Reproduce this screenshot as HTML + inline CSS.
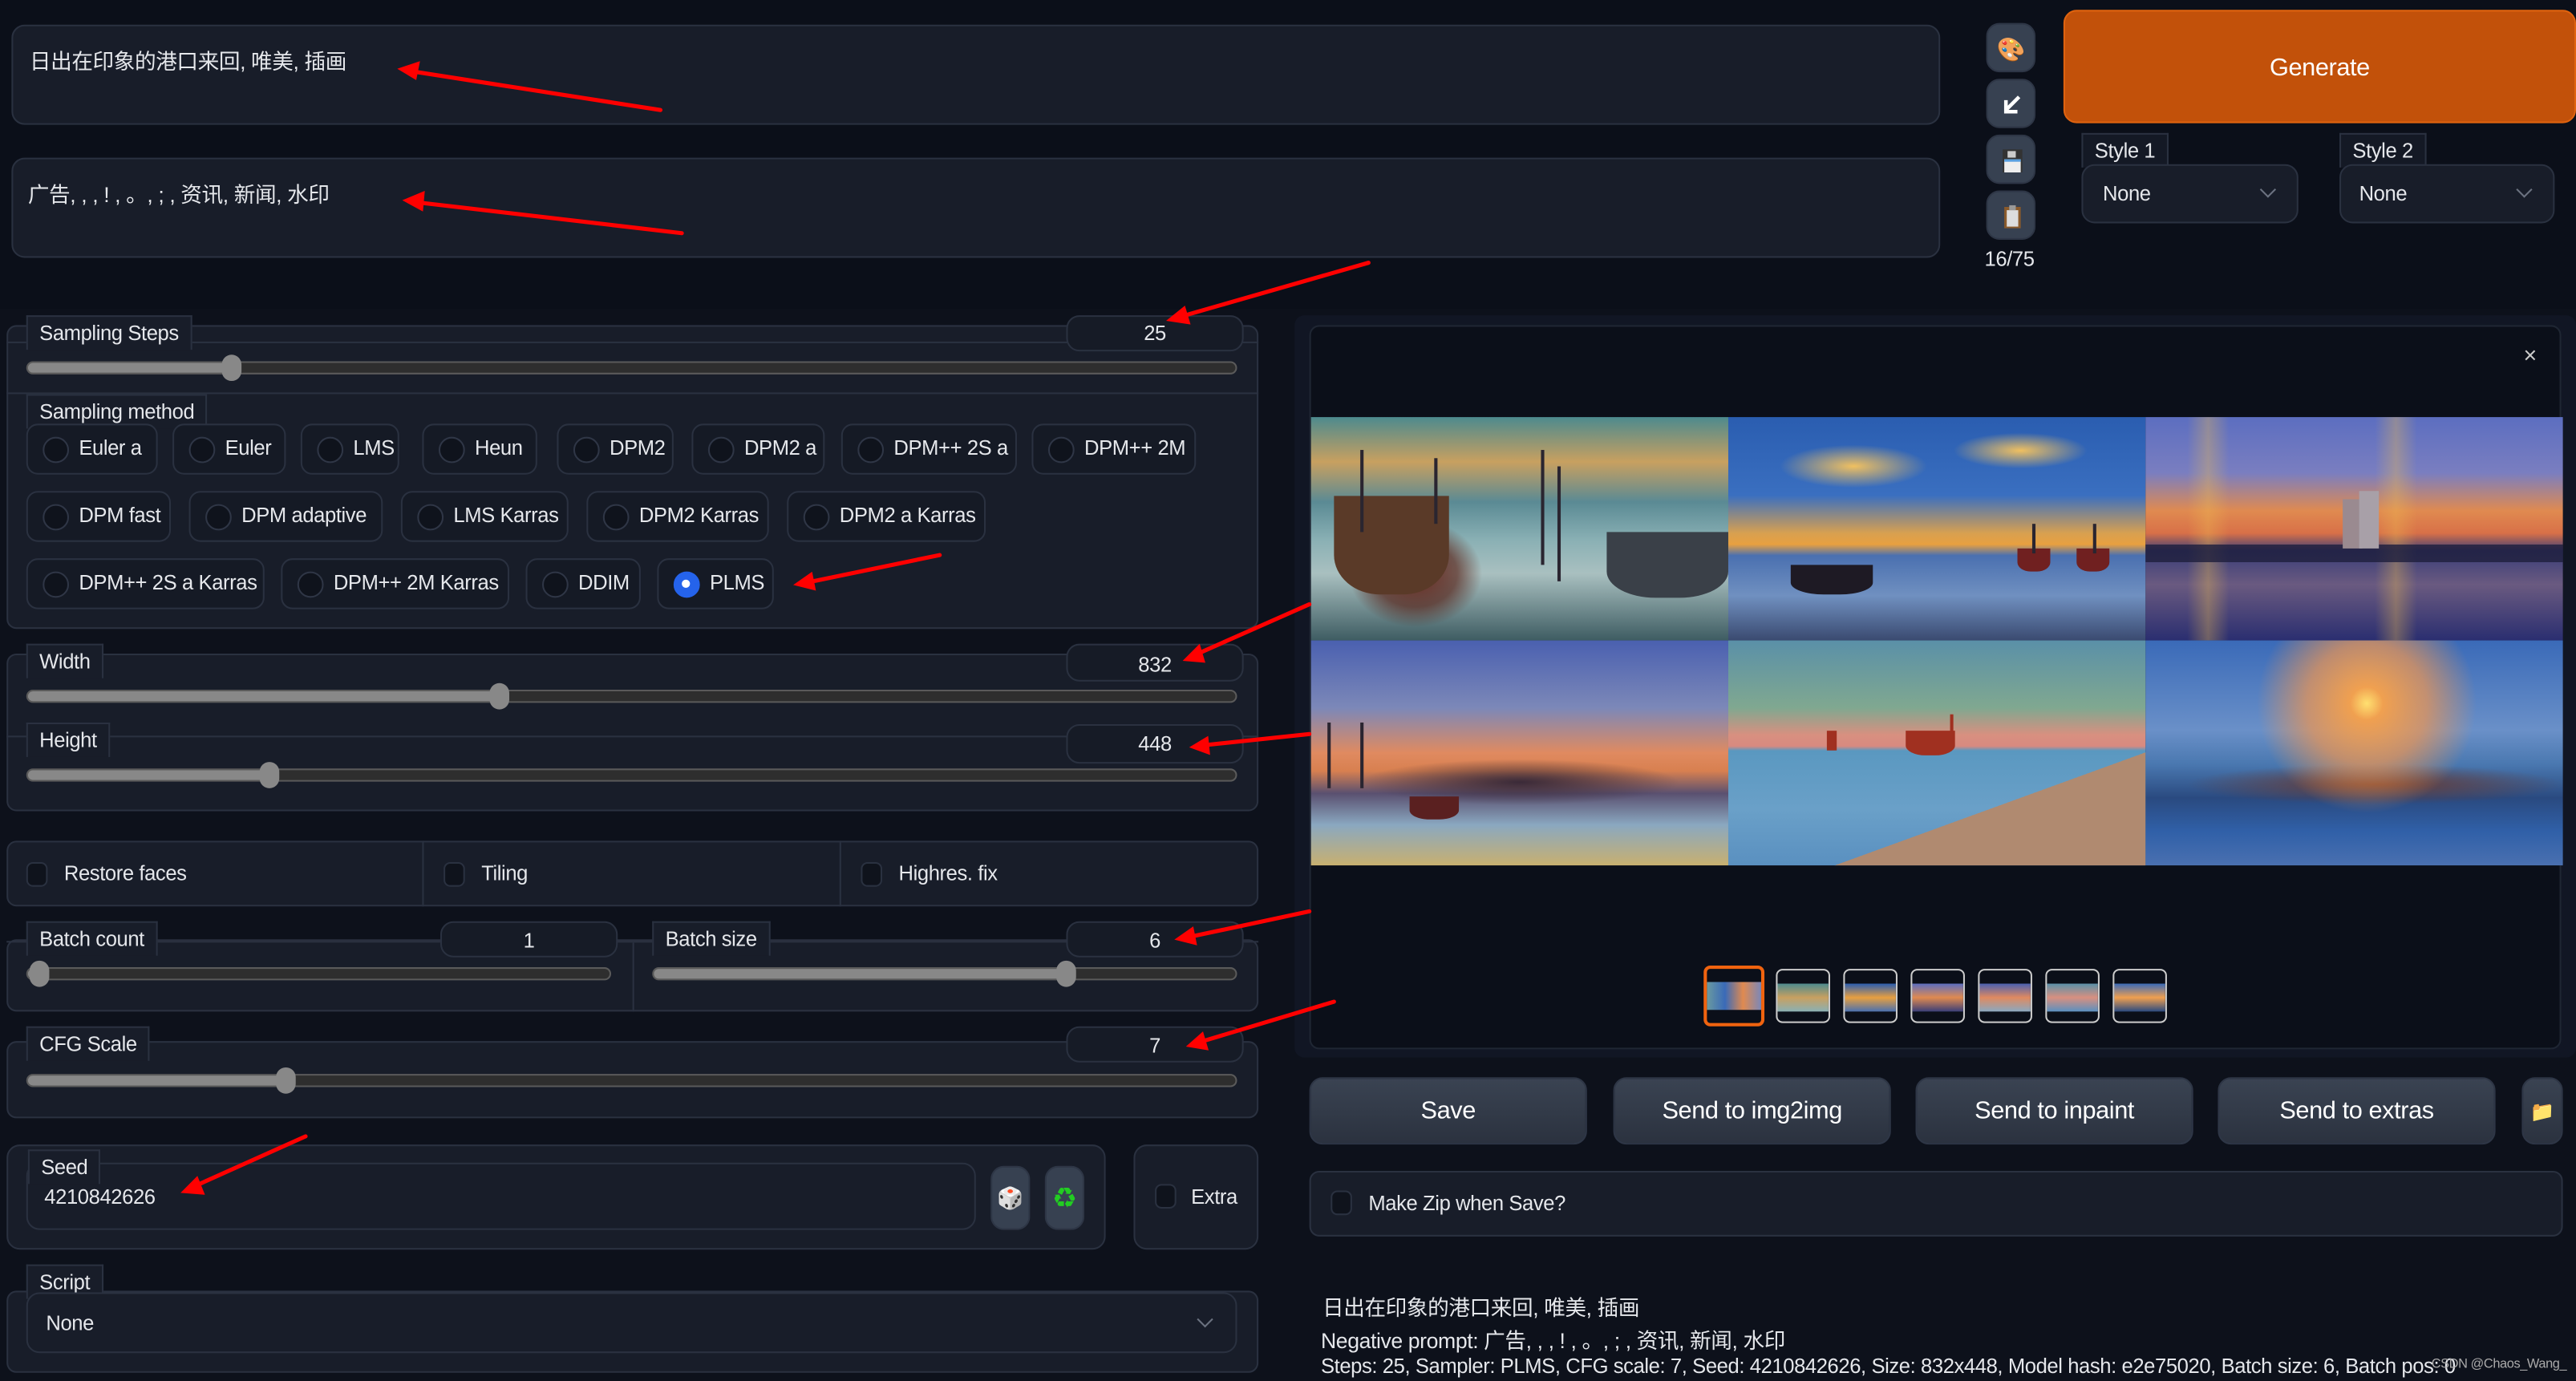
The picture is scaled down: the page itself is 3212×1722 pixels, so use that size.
<!DOCTYPE html>
<html><head><meta charset="utf-8">
<style>
*{box-sizing:border-box;margin:0;padding:0}
html,body{width:3212px;height:1722px;overflow:hidden;background:#0b0f19}
#root{position:absolute;left:0;top:0;width:1568px;height:841px;transform:scale(2.04847,2.0476);transform-origin:0 0;background:#0b0f19;font-family:"Liberation Sans","Noto Sans CJK SC",sans-serif;color:#e5e7eb;font-size:12.5px;letter-spacing:-0.2px}
.a{position:absolute}
.p{position:absolute;background:#181d29;border:1px solid #2a3140;border-radius:6px}
.lbl{position:absolute;background:#181d29;border:1px solid #2a3140;border-bottom:none;border-left:none;padding:2px 7px;font-size:12.5px;line-height:16px;white-space:nowrap}
.num{position:absolute;border:1px solid #2a3140;border-radius:8px;background:#161b26;text-align:center;font-size:12.5px;line-height:20px}
.tr{position:absolute;height:8px;border-radius:4px;background:#2e2e2e;border:1px solid #5a5a5a}
.tr i{position:absolute;left:0;top:0;bottom:0;background:#888;border-radius:4px 0 0 4px}
.tr b{position:absolute;top:-5px;width:12px;height:16px;margin-left:-6px;border-radius:6px;background:#888}
.hl{position:absolute;height:1px;background:#2a3140}
.rd{position:absolute;height:31px;border:1px solid #2a3140;border-radius:7px;background:#151a25;font-size:12.5px;line-height:29px;padding-left:31px;white-space:nowrap}
.rd:before{content:"";position:absolute;left:9px;top:7px;width:14px;height:14px;border-radius:50%;border:1px solid #2f3646;background:#0f131c}
.rd.on:before{background:#2563eb;border-color:#2563eb;box-shadow:inset 0 0 0 4px #2563eb}
.rd.on:after{content:"";position:absolute;left:14px;top:12px;width:5px;height:5px;border-radius:50%;background:#fff}
.cb{position:absolute;width:13px;height:15px;border:1px solid #2a3140;border-radius:4px;background:#0f131c}
.ib{position:absolute;width:30px;height:30px;border-radius:8px;background:#374151;border:1px solid #2e3646}
.btn{position:absolute;top:656px;height:41px;border-radius:8px;background:linear-gradient(#3a4352,#2b323f);border:1px solid #2e3646;text-align:center;line-height:40px;font-size:15px;color:#fff}
.im{position:absolute;top:254px;height:136px;width:254px;overflow:hidden}
.im2{top:390px;height:137px}
.im s{position:absolute;background:#1e1a24;border-radius:0 0 40% 40%}
.im u{position:absolute;width:1.5px;background:#2a2530}
.th{position:absolute;top:590px;width:33px;height:33px;border:1px solid #ccc;border-radius:4px;background:#0b0f19;overflow:hidden}
.th i{position:absolute;left:0;right:0;top:8px;height:17px}
.sel{position:absolute;border:1px solid #2a3140;border-radius:8px;background:#181d29}
.chev{position:absolute;width:7px;height:7px;border-right:1.5px solid #6b7280;border-bottom:1.5px solid #6b7280;transform:rotate(45deg)}
</style></head><body><div id="root">

<div class="p" style="left:7px;top:15px;width:1174px;height:61px;border-radius:8px"></div>
<div class="a" style="left:18px;top:27px;font-size:13px">日出在印象的港口来回, 唯美, 插画</div>
<div class="p" style="left:7px;top:96px;width:1174px;height:61px;border-radius:8px"></div>
<div class="a" style="left:17px;top:108px;font-size:13px">广告, , , ! , 。, ; , 资讯, 新闻, 水印</div>

<div class="ib" style="left:1209px;top:14px;text-align:center;line-height:30px;font-size:14px">🎨</div>
<div class="ib" style="left:1209px;top:48px"><svg width="30" height="30"><path d="M19 10 L11 18 M11 12 V19 H18" stroke="#fff" stroke-width="2.2" fill="none"/></svg></div>
<div class="ib" style="left:1209px;top:82px"><svg width="30" height="30"><rect x="9" y="8" width="12" height="14" fill="#333"/><rect x="10" y="14" width="10" height="8" fill="#eee"/><rect x="12" y="9" width="5" height="4" fill="#ccc"/><rect x="10" y="14" width="10" height="1.5" fill="#5aa0e0"/></svg></div>
<div class="ib" style="left:1209px;top:116px"><svg width="30" height="30"><rect x="10" y="9" width="10" height="13" fill="#8a5a2b"/><rect x="11.5" y="11" width="7" height="10" fill="#ddd"/><rect x="13" y="8" width="4" height="3" fill="#999"/></svg></div>
<div class="a" style="left:1208px;top:151px;font-size:12.5px">16/75</div>

<div class="a" style="left:1256px;top:6px;width:312px;height:69px;border-radius:8px;background:#c2510a;border:1px solid #e0630f;text-align:center;line-height:69px;font-size:15px;color:#fff">Generate</div>
<div class="lbl" style="left:1267px;top:81px;border-left:1px solid #2a3140;background:#141925">Style 1</div>
<div class="sel" style="left:1267px;top:100px;width:132px;height:36px"></div>
<div class="a" style="left:1280px;top:111px">None</div>
<div class="chev" style="left:1377px;top:112px"></div>
<div class="lbl" style="left:1424px;top:81px;border-left:1px solid #2a3140;background:#141925">Style 2</div>
<div class="sel" style="left:1424px;top:100px;width:131px;height:36px"></div>
<div class="a" style="left:1436px;top:111px">None</div>
<div class="chev" style="left:1533px;top:112px"></div>

<div class="a" style="left:0;top:188px;width:1568px;height:653px;background:#0d111b"></div>

<div class="p" style="left:4px;top:198px;width:762px;height:185px"></div>
<div class="hl" style="left:4px;top:208px;width:762px"></div>
<div class="lbl" style="left:16px;top:192px;border-left:1px solid #2a3140">Sampling Steps</div>
<div class="num" style="left:649px;top:192px;width:108px;height:22px">25</div>
<div class="tr" style="left:16px;top:220px;width:737px"><i style="width:124px"></i><b style="left:124px"></b></div>
<div class="hl" style="left:4px;top:239px;width:762px"></div>
<div class="lbl" style="left:16px;top:240px;border-left:1px solid #2a3140">Sampling method</div>
<div class="rd" style="left:16px;top:258px;width:80px">Euler a</div>
<div class="rd" style="left:105px;top:258px;width:69px">Euler</div>
<div class="rd" style="left:183px;top:258px;width:60px">LMS</div>
<div class="rd" style="left:257px;top:258px;width:70px">Heun</div>
<div class="rd" style="left:339px;top:258px;width:71px">DPM2</div>
<div class="rd" style="left:421px;top:258px;width:81px">DPM2 a</div>
<div class="rd" style="left:512px;top:258px;width:107px">DPM++ 2S a</div>
<div class="rd" style="left:628px;top:258px;width:100px">DPM++ 2M</div>
<div class="rd" style="left:16px;top:299px;width:88px">DPM fast</div>
<div class="rd" style="left:115px;top:299px;width:118px">DPM adaptive</div>
<div class="rd" style="left:244px;top:299px;width:102px">LMS Karras</div>
<div class="rd" style="left:357px;top:299px;width:111px">DPM2 Karras</div>
<div class="rd" style="left:479px;top:299px;width:121px">DPM2 a Karras</div>
<div class="rd" style="left:16px;top:340px;width:145px">DPM++ 2S a Karras</div>
<div class="rd" style="left:171px;top:340px;width:139px">DPM++ 2M Karras</div>
<div class="rd" style="left:320px;top:340px;width:70px">DDIM</div>
<div class="rd on" style="left:400px;top:340px;width:71px">PLMS</div>

<div class="p" style="left:4px;top:398px;width:762px;height:96px"></div>
<div class="lbl" style="left:16px;top:392px;border-left:1px solid #2a3140">Width</div>
<div class="num" style="left:649px;top:392px;width:108px;height:23px;line-height:24px">832</div>
<div class="tr" style="left:16px;top:420px;width:737px"><i style="width:287px"></i><b style="left:287px"></b></div>
<div class="hl" style="left:4px;top:448px;width:762px"></div>
<div class="lbl" style="left:16px;top:440px;border-left:1px solid #2a3140">Height</div>
<div class="num" style="left:649px;top:441px;width:108px;height:24px;line-height:22px">448</div>
<div class="tr" style="left:16px;top:468px;width:737px"><i style="width:147px"></i><b style="left:147px"></b></div>

<div class="p" style="left:4px;top:512px;width:762px;height:40px"></div>
<div class="a" style="left:257px;top:512px;width:1px;height:40px;background:#2a3140"></div>
<div class="a" style="left:511px;top:512px;width:1px;height:40px;background:#2a3140"></div>
<div class="cb" style="left:16px;top:525px"></div><div class="a" style="left:39px;top:525px">Restore faces</div>
<div class="cb" style="left:270px;top:525px"></div><div class="a" style="left:293px;top:525px">Tiling</div>
<div class="cb" style="left:524px;top:525px"></div><div class="a" style="left:547px;top:525px">Highres. fix</div>

<div class="p" style="left:4px;top:572px;width:762px;height:44px"></div>
<div class="hl" style="left:4px;top:573px;width:762px"></div>
<div class="a" style="left:385px;top:574px;width:1px;height:42px;background:#2a3140"></div>
<div class="lbl" style="left:16px;top:561px;border-left:1px solid #2a3140">Batch count</div>
<div class="num" style="left:268px;top:561px;width:108px;height:22px;line-height:22px">1</div>
<div class="tr" style="left:16px;top:589px;width:356px"><i style="width:7px"></i><b style="left:7px"></b></div>
<div class="lbl" style="left:397px;top:561px;border-left:1px solid #2a3140">Batch size</div>
<div class="num" style="left:649px;top:561px;width:108px;height:22px;line-height:22px">6</div>
<div class="tr" style="left:397px;top:589px;width:356px"><i style="width:251px"></i><b style="left:251px"></b></div>

<div class="p" style="left:4px;top:634px;width:762px;height:47px"></div>
<div class="lbl" style="left:16px;top:625px;border-left:1px solid #2a3140">CFG Scale</div>
<div class="num" style="left:649px;top:625px;width:108px;height:22px;line-height:22px">7</div>
<div class="tr" style="left:16px;top:654px;width:737px"><i style="width:157px"></i><b style="left:157px"></b></div>

<div class="p" style="left:4px;top:697px;width:669px;height:64px;border-radius:8px"></div>
<div class="sel" style="left:16px;top:708px;width:578px;height:41px"></div>
<div class="lbl" style="left:17px;top:700px;border-left:1px solid #2a3140">Seed</div>
<div class="a" style="left:27px;top:722px">4210842626</div>
<div class="ib" style="left:603px;top:710px;width:24px;height:39px;text-align:center;line-height:38px;font-size:13px">🎲</div>
<div class="ib" style="left:636px;top:710px;width:24px;height:39px;text-align:center;line-height:38px;font-size:13px;color:#2c2">♻</div>
<div class="p" style="left:690px;top:697px;width:76px;height:64px;border-radius:8px"></div>
<div class="cb" style="left:703px;top:721px"></div><div class="a" style="left:725px;top:722px">Extra</div>

<div class="p" style="left:4px;top:786px;width:762px;height:50px"></div>
<div class="lbl" style="left:16px;top:770px;border-left:1px solid #2a3140">Script</div>
<div class="sel" style="left:16px;top:787px;width:737px;height:37px"></div>
<div class="a" style="left:28px;top:799px">None</div>
<div class="chev" style="left:730px;top:800px"></div>

<div class="a" style="left:788px;top:192px;width:780px;height:452px;background:#111624;border-radius:6px"></div>
<div class="a" style="left:797px;top:198px;width:762px;height:441px;background:#0b0f19;border:1px solid #1f2633;border-radius:6px"></div>
<div class="a" style="left:1536px;top:208px;font-size:14px;color:#ccc">×</div>

<div class="im" style="left:798px;background:radial-gradient(ellipse 20% 30% at 25% 70%,#6a2a20 0%,rgba(90,40,30,.7) 50%,transparent 80%),linear-gradient(180deg,#4d8a8e 0%,#c8a060 20%,#5a8a94 38%,#8ab0b4 55%,#a9c0c0 70%,#3e5c62 100%)">
<s style="left:14px;top:48px;width:70px;height:60px;background:#5a3a28"></s><u style="left:30px;top:20px;height:50px"></u><u style="left:75px;top:25px;height:40px"></u><u style="left:140px;top:20px;height:70px"></u><u style="left:150px;top:30px;height:70px"></u><s style="left:180px;top:70px;width:74px;height:40px;background:#3a4048"></s></div>
<div class="im" style="left:1052px;background:radial-gradient(ellipse 22% 12% at 30% 22%,#f0c060 0%,transparent 80%),radial-gradient(ellipse 20% 10% at 70% 15%,#f0c060 0%,transparent 80%),linear-gradient(180deg,#2a5db0 0%,#3a6fc0 35%,#d8a050 52%,#e8a040 57%,#4a70b0 62%,#7090c0 80%,#3a4a70 100%)">
<s style="left:38px;top:90px;width:50px;height:18px"></s><s style="left:176px;top:80px;width:20px;height:14px;background:#702020"></s><s style="left:212px;top:80px;width:20px;height:14px;background:#702020"></s><u style="left:185px;top:65px;height:18px"></u><u style="left:222px;top:65px;height:18px"></u></div>
<div class="im" style="left:1306px;background:linear-gradient(180deg,transparent 57%,rgba(30,30,60,.8) 57%,rgba(30,30,60,.8) 65%,transparent 65%),linear-gradient(90deg,transparent 10%,rgba(240,190,80,.35) 15%,transparent 20%,transparent 55%,rgba(240,190,80,.35) 60%,transparent 65%),linear-gradient(180deg,#5c6ec0 0%,#7a7ec0 25%,#e08a50 42%,#d87048 52%,#3a3e78 60%,#6a5a80 75%,#2a2e70 100%)">
<s style="left:120px;top:50px;width:12px;height:30px;border-radius:0;background:#9a8a90"></s><s style="left:130px;top:45px;width:12px;height:35px;border-radius:0;background:#a8a0a8"></s></div>
<div class="im im2" style="left:798px;background:radial-gradient(ellipse 45% 12% at 50% 63%,#3a2a38 0%,transparent 85%),linear-gradient(180deg,#4a60b0 0%,#7c88b8 30%,#e08a60 50%,#d88050 58%,#5a5070 68%,#8aa8c0 82%,#c8b070 100%)">
<s style="left:60px;top:95px;width:30px;height:14px;background:#5a2020"></s><u style="left:10px;top:50px;height:40px"></u><u style="left:30px;top:50px;height:40px"></u></div>
<div class="im im2" style="left:1052px;background:linear-gradient(160deg,transparent 70%,#b08a70 70%),linear-gradient(180deg,#5a90a8 0%,#80a890 30%,#d89080 42%,#d88a80 47%,#5a98c0 49%,#6aa0c8 75%,#5a90c0 100%)">
<s style="left:108px;top:55px;width:30px;height:15px;background:#a03020"></s><u style="left:135px;top:45px;height:18px;background:#a03020;width:2px"></u><s style="left:60px;top:55px;width:6px;height:12px;border-radius:0;background:#a03020"></s></div>
<div class="im im2" style="left:1306px;background:radial-gradient(circle at 53% 28%,#ffe070 0%,#f0a050 6%,rgba(240,150,80,.7) 22%,transparent 40%),radial-gradient(ellipse 50% 10% at 55% 64%,#6a3a30 0%,transparent 90%),linear-gradient(180deg,#3a6ab8 0%,#6a90c8 40%,#4a78b0 55%,#2a4a80 70%,#3060a8 85%,#4a70b0 100%)"></div>

<div class="th" style="left:1037px;top:588px;width:37px;height:37px;border:2px solid #f0630f"><i style="background:linear-gradient(90deg,#6a9aa0,#3a6ab8,#e08a50,#7c88b8)"></i></div>
<div class="th" style="left:1081px"><i style="background:linear-gradient(180deg,#4d8a8e,#c8a060,#8ab0b4)"></i></div>
<div class="th" style="left:1122px"><i style="background:linear-gradient(180deg,#2a5db0,#e8a040,#4a70b0)"></i></div>
<div class="th" style="left:1163px"><i style="background:linear-gradient(180deg,#5c6ec0,#e08a50,#3a3e78)"></i></div>
<div class="th" style="left:1204px"><i style="background:linear-gradient(180deg,#4a60b0,#e08a60,#8aa8c0)"></i></div>
<div class="th" style="left:1245px"><i style="background:linear-gradient(180deg,#5a90a8,#d89080,#5a90c0)"></i></div>
<div class="th" style="left:1286px"><i style="background:linear-gradient(180deg,#3a6ab8,#f0a050,#2a4a80)"></i></div>

<div class="btn" style="left:797px;width:169px">Save</div>
<div class="btn" style="left:982px;width:169px">Send to img2img</div>
<div class="btn" style="left:1166px;width:169px">Send to inpaint</div>
<div class="btn" style="left:1350px;width:169px">Send to extras</div>
<div class="btn" style="left:1535px;width:25px;font-size:12px">📁</div>

<div class="p" style="left:797px;top:713px;width:763px;height:40px"></div>
<div class="cb" style="left:810px;top:725px"></div><div class="a" style="left:833px;top:726px">Make Zip when Save?</div>

<div class="a" style="left:805px;top:786px;font-size:13px">日出在印象的港口来回, 唯美, 插画</div>
<div class="a" style="left:804px;top:806px;font-size:13px">Negative prompt: 广告, , , ! , 。, ; , 资讯, 新闻, 水印</div>
<div class="a" style="left:804px;top:825px;font-size:12.5px;white-space:nowrap">Steps: 25, Sampler: PLMS, CFG scale: 7, Seed: 4210842626, Size: 832x448, Model hash: e2e75020, Batch size: 6, Batch pos: 0</div>
<div class="a" style="left:1480px;top:826px;font-size:8px;color:#aaa">CSDN @Chaos_Wang_</div>

<svg class="a" style="left:0;top:0" width="1568" height="841">
<g fill="#f00" stroke="#f00" stroke-linecap="round">
<line x1="402" y1="67" x2="248" y2="43" stroke-width="2.5"/><polygon points="243,42 255,38 253,48"/>
<line x1="415" y1="142" x2="252" y2="123" stroke-width="2.5"/><polygon points="246,122 258,117 257,128"/>
<line x1="833" y1="160" x2="718" y2="193" stroke-width="2.5"/><polygon points="711,195 721,187 724,197"/>
<line x1="572" y1="338" x2="490" y2="355" stroke-width="2.5"/><polygon points="484,356 494,349 496,359"/>
<line x1="797" y1="368" x2="727" y2="399" stroke-width="2.5"/><polygon points="721,402 730,393 733,403"/>
<line x1="797" y1="447" x2="731" y2="454" stroke-width="2.5"/><polygon points="725,455 735,449 736,459"/>
<line x1="797" y1="555" x2="722" y2="571" stroke-width="2.5"/><polygon points="716,572 726,565 728,575"/>
<line x1="812" y1="610" x2="729" y2="635" stroke-width="2.5"/><polygon points="723,637 732,629 735,639"/>
<line x1="186" y1="692" x2="117" y2="723" stroke-width="2.5"/><polygon points="111,726 120,717 124,727"/>
</g></svg>

</div></body></html>
